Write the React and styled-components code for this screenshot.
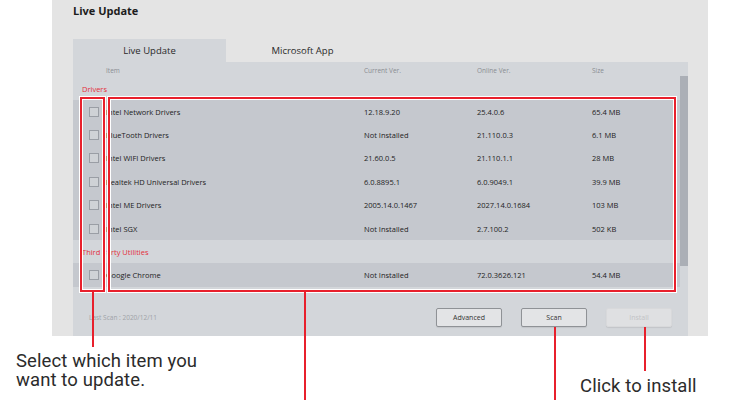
import styled, { createGlobalStyle } from "styled-components";

const GlobalStyle = createGlobalStyle`
  html, body {
    margin: 0;
    padding: 0;
    background: #ffffff;
  }
  * {
    box-sizing: border-box;
  }
`;

const Figure = styled.div`
  position: relative;
  width: 740px;
  height: 400px;
  overflow: hidden;
  background: #ffffff;
`;

const Window = styled.div`
  margin-left: 52px;
  width: 656px;
  height: 336px;
  background: #e4e4e4;
  padding: 0 20px 0 21px;
  display: flex;
  flex-direction: column;
  font-family: "Open Sans", "Noto Sans", sans-serif;
`;

const Title = styled.h1`
  margin: 0;
  height: 39px;
  padding-top: 3px;
  font-size: 11px;
  font-weight: 700;
  color: #1c1c1c;
`;

const Tabs = styled.div`
  display: flex;
  height: 23px;
`;

const Tab = styled.div`
  width: 153px;
  display: flex;
  align-items: center;
  justify-content: center;
  font-size: 9.5px;
  color: #2a2a2a;
  background: ${(p) => (p.active ? "#d3d6da" : "transparent")};
`;

const Panel = styled.div`
  position: relative;
  flex: 1;
  background: #d3d6da;
  display: flex;
  flex-direction: column;
  padding-right: 8px;
`;

const Scrollbar = styled.div`
  position: absolute;
  top: 14px;
  right: 0;
  width: 8px;
  height: 190px;
  background: #abafb6;
`;

const Row = styled.div`
  display: grid;
  grid-template-columns: 24px 258px 113px 115px 1fr;
  align-items: center;
  padding-left: 9px;
  height: ${(p) => p.h || 23.4}px;
  background: ${(p) => (p.dark ? "#c5c8ce" : "transparent")};
  font-size: 7.5px;
  color: #222;
`;

const HeadCell = styled.span`
  font-size: 6.5px;
  color: #8a8d92;
`;

const Section = styled.div`
  display: flex;
  align-items: center;
  padding-left: 9px;
  height: ${(p) => p.h}px;
  font-size: 7.5px;
  color: #e3303c;
`;

const Check = styled.span`
  width: 10px;
  height: 10px;
  margin-left: 7px;
  border: 1px solid #9a9ea5;
  background: #cfd2d6;
`;

const Footer = styled.div`
  margin-top: auto;
  height: 48px;
  display: flex;
  align-items: center;
  padding: 10px 8px 0 16px;
`;

const LastScan = styled.span`
  font-size: 6.5px;
  color: #a0a3a8;
  flex: 1;
`;

const Buttons = styled.div`
  display: flex;
  gap: 19px;
`;

const Button = styled.button`
  width: 66px;
  height: 19px;
  padding: 0;
  font-family: inherit;
  font-size: 7px;
  color: ${(p) => (p.disabled ? "#c2c3c6" : "#333")};
  background: ${(p) => (p.disabled ? "#dfe0e2" : "#e3e4e6")};
  border: 1px solid ${(p) => (p.disabled ? "#d8d9db" : "#8f9296")};
  border-radius: 2px;
  box-shadow: 0 1px 1px rgba(0, 0, 0, 0.08);
`;

const Callout = styled.div`
  position: absolute;
  left: ${(p) => p.x}px;
  top: ${(p) => p.y}px;
  width: ${(p) => p.w}px;
  height: ${(p) => p.h}px;
  border: 2px solid #e8202c;
  box-shadow: inset 0 0 0 1px #ffffff, 0 0 0 1px #ffffff;
  pointer-events: none;
`;

const Leader = styled.div`
  position: absolute;
  left: ${(p) => p.x}px;
  top: ${(p) => p.y}px;
  width: 2px;
  height: ${(p) => p.h}px;
  background: #e8202c;
`;

const Note = styled.div`
  position: absolute;
  left: ${(p) => p.x}px;
  top: ${(p) => p.y}px;
  font-family: Roboto, "Noto Sans", sans-serif;
  font-size: 18.5px;
  letter-spacing: 0.1px;
  line-height: 19px;
  color: #2b2b2b;
  white-space: pre;
`;

const drivers = [
  ["Intel Network Drivers", "12.18.9.20", "25.4.0.6", "65.4 MB"],
  ["BlueTooth Drivers", "Not Installed", "21.110.0.3", "6.1 MB"],
  ["Intel WIFI Drivers", "21.60.0.5", "21.110.1.1", "28 MB"],
  ["Realtek HD Universal Drivers", "6.0.8895.1", "6.0.9049.1", "39.9 MB"],
  ["Intel ME Drivers", "2005.14.0.1467", "2027.14.0.1684", "103 MB"],
  ["Intel SGX", "Not Installed", "2.7.100.2", "502 KB"],
];

const utilities = [["Google Chrome", "Not Installed", "72.0.3626.121", "54.4 MB"]];

function ItemRow({ item }) {
  return (
    <Row dark>
      <Check />
      {item.map((v) => (
        <span key={v}>{v}</span>
      ))}
    </Row>
  );
}

export default function App() {
  return (
    <>
      <GlobalStyle />
      <Figure>
        <Window>
          <Title>Live Update</Title>
          <Tabs>
            <Tab active>Live Update</Tab>
            <Tab>Microsoft App</Tab>
          </Tabs>
          <Panel>
            <Scrollbar />
            <Row h={16}>
              <span />
              <HeadCell>Item</HeadCell>
              <HeadCell>Current Ver.</HeadCell>
              <HeadCell>Online Ver.</HeadCell>
              <HeadCell>Size</HeadCell>
            </Row>
            <Section h={22}>Drivers</Section>
            {drivers.map((d) => (
              <ItemRow key={d[0]} item={d} />
            ))}
            <Section h={23}>Third Party Utilities</Section>
            {utilities.map((d) => (
              <ItemRow key={d[0]} item={d} />
            ))}
            <Footer>
              <LastScan>Last Scan : 2020/12/11</LastScan>
              <Buttons>
                <Button>Advanced</Button>
                <Button>Scan</Button>
                <Button disabled>Install</Button>
              </Buttons>
            </Footer>
          </Panel>
        </Window>

        <Callout x={80} y={97} w={25} h={195} />
        <Callout x={108} y={97} w={568} h={195} />
        <Leader x={92} y={292} h={55} />
        <Leader x={304} y={292} h={108} />
        <Leader x={554} y={327} h={73} />
        <Leader x={644} y={327} h={44} />
        <Note x={16} y={352}>{"Select which item you\nwant to update."}</Note>
        <Note x={580} y={377}>Click to install</Note>
      </Figure>
    </>
  );
}
